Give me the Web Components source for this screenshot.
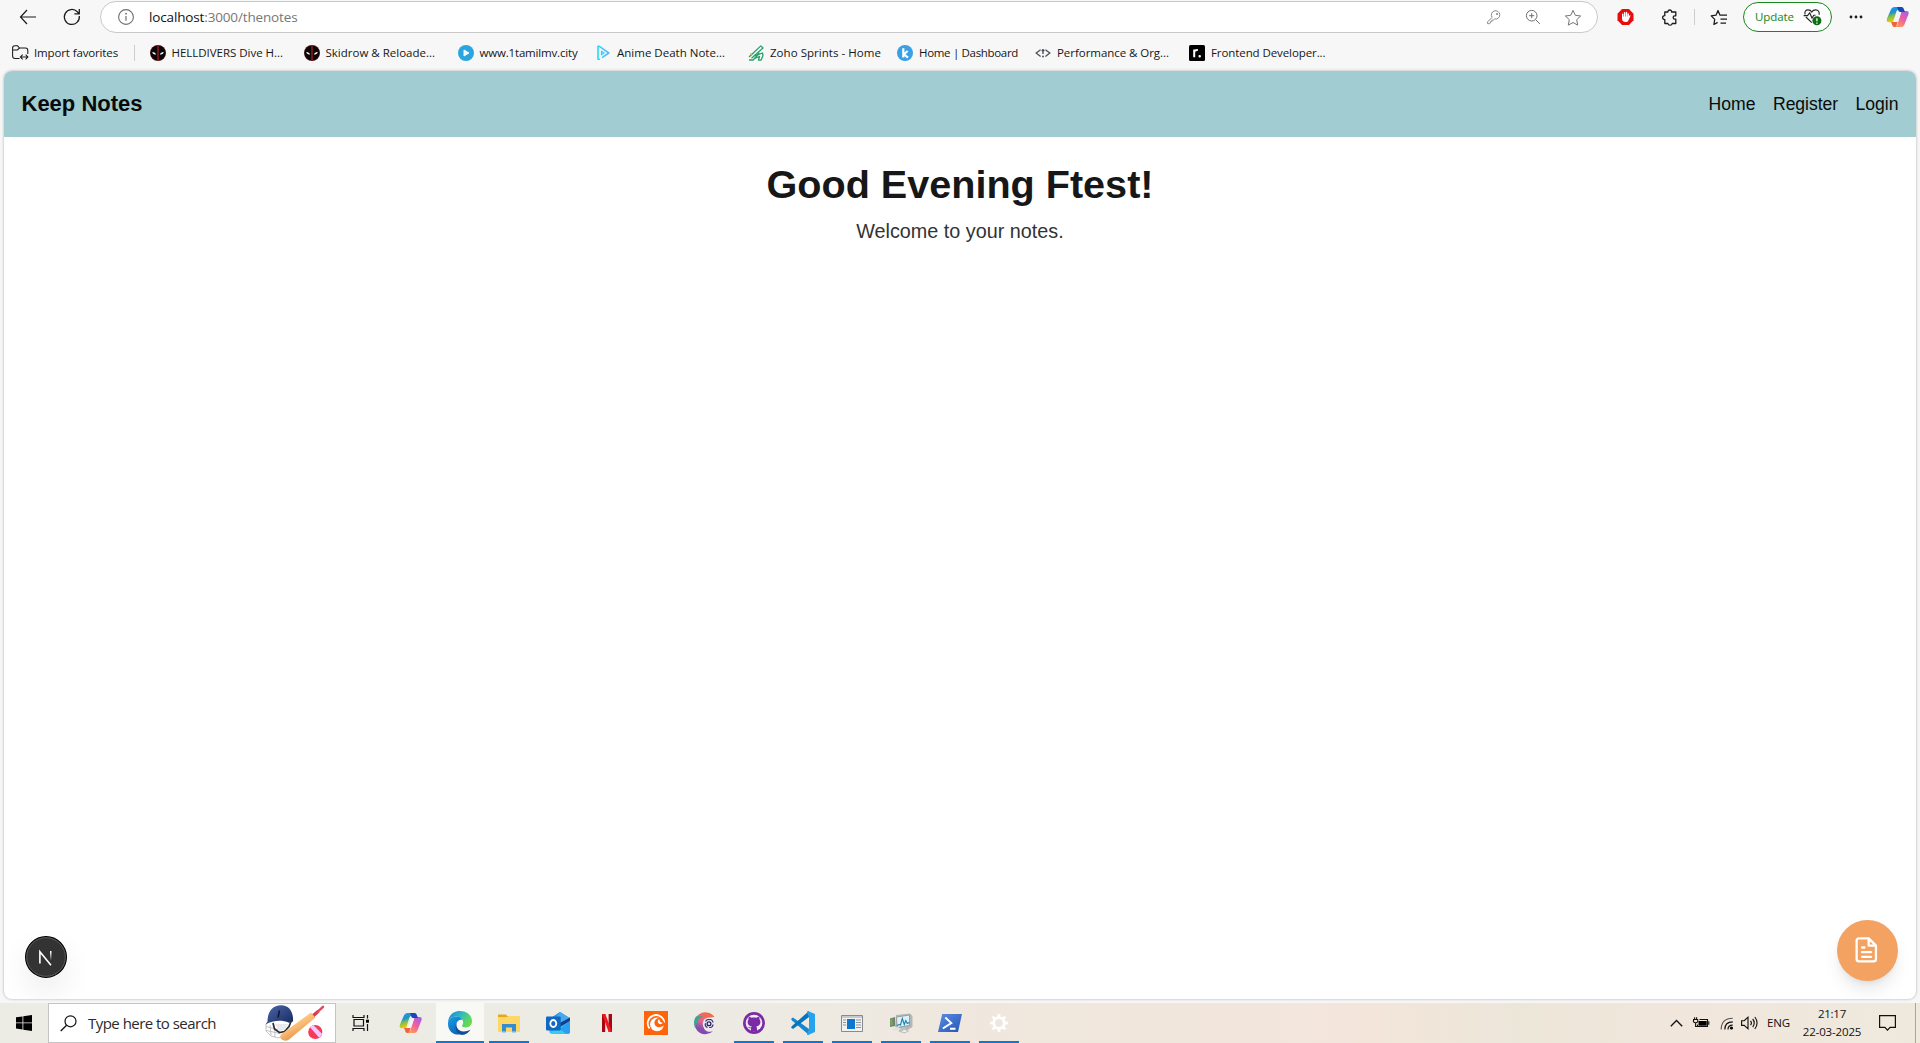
<!DOCTYPE html>
<html lang="en">
<head>
<meta charset="utf-8">
<title>Keep Notes</title>
<style>
html,body{margin:0;height:100%;overflow:hidden;background:#f7f7f7}
</style>
</head>
<body>
<desk-top></desk-top>
<script>
const define = (name, html, after) => {
  const t = document.createElement('template');
  t.innerHTML = html;
  customElements.define(name, class extends HTMLElement {
    connectedCallback() {
      if (this.shadowRoot) return;
      this.attachShadow({mode: 'open'}).append(t.content.cloneNode(true));
      if (after) after(this, this.shadowRoot);
    }
  });
};

const copilot = (id) => `<defs><linearGradient id="${id}a" x1="0" y1="0" x2=".3" y2="1"><stop offset="0" stop-color="#1aa7f0"/><stop offset=".4" stop-color="#1d8fd0"/><stop offset=".65" stop-color="#7cc14a"/><stop offset="1" stop-color="#ffc800"/></linearGradient><linearGradient id="${id}b" x1=".8" y1="0" x2=".2" y2="1"><stop offset="0" stop-color="#a45fe8"/><stop offset=".5" stop-color="#f0609c"/><stop offset="1" stop-color="#ff9a5a"/></linearGradient></defs>
<path fill="url(#${id}b)" d="M9 22h6c2 0 3-1 3.800-3.500l3.600-9c.8-2.500 0-3.500-2-3.500h-5L12 17.500C11.500 19.500 11 21.500 9 22z"/><path fill="url(#${id}a)" d="M15.500 2h-7C6.500 2 5.300 3.200 4.500 5.500L1 13.500C.2 16 1 17.200 3.200 17.200H7l3.200-10C10.800 5 12 4.500 14 4.500h2.500z"/><path fill="#1748b8" d="M11 2h4.500c1.500 0 2 1 2.500 2.500L19 7h-4.500c-1.500 0-2-.7-2.500-2.500z"/><path fill="#f4623a" d="M5 17h4.500l3-3-2 6.500c-.5 1.200-1 1.500-2 1.500-1.500 0-2-1-2.500-2.700z"/><path fill="#f4f4fb" d="M12.300 7.500h3l-2.800 8c-.5 1.200-1 1.500-2.200 1.500H8.500z"/>`;

const mask = `<circle cx="8" cy="8" r="8" fill="#4a1116"/><circle cx="8" cy="8" r="7.300" fill="#090707"/><path d="M8 0v16" stroke="#86151c" stroke-width="1.800"/><path fill="#fff" d="M2.300 7c1.900 0 3.400.9 3.800 2.400-1.900.5-3.600-.5-3.800-2.400zM13.700 7c-1.900 0-3.400.9-3.800 2.400 1.900.5 3.600-.5 3.800-2.400z"/>`;

/* name: [width, height, viewBox, markup] */
const ICONS = {
  back: [18,16,'0 0 18 16','<path d="M8 1L1.500 8 8 15M1.500 8H17" fill="none" stroke="#1b1b1b" stroke-width="1.200"/>'],
  refresh: [18,18,'0 0 18 18','<path d="M16.300 8A7.500 7.500 0 1 1 14.300 3.800L16.200 5.700M16.300 1v4.900h-4.900" fill="none" stroke="#1b1b1b" stroke-width="1.250"/>'],
  info: [16,16,'0 0 16 16','<circle cx="8" cy="8" r="7.400" fill="none" stroke="#6e6e6e" stroke-width="1.100"/><path d="M8 7v4.800" stroke="#6e6e6e" stroke-width="1.200"/><circle cx="8" cy="4.700" r=".9" fill="#6e6e6e"/>'],
  key: [16,16,'0 0 16 16','<path d="M6.200 8.400A4.200 4.200 0 1 1 8.600 10L7.200 11.200H5.800v1.500H4.300V14L3.700 14.700H1.600V12.700z" fill="none" stroke="#8a8a8a"/><circle cx="11" cy="5" r=".9" fill="#777"/>'],
  zoom: [16,16,'0 0 16 16','<circle cx="6.700" cy="6.700" r="5.300" fill="none" stroke="#6e6e6e"/><path d="M4.200 6.700h5M6.700 4.200v5M10.600 10.600l4.300 4.300" stroke="#6e6e6e"/>'],
  star: [18,17,'0 0 18 17','<path d="M9 1.400l2.300 4.900 5.400.7-4 3.700 1 5.400L9 13.500l-4.700 2.600 1-5.400-4-3.700 5.400-.7z" fill="none" stroke="#757575" stroke-linejoin="round"/>'],
  hand: [17,16,'0 0 17 16','<path d="M5 0h7l4.500 4.800v6.400L12 16H5L.5 11.200V4.800z" fill="#e80c0c"/><path d="M5.700 5.200V9M7.600 3.700V9M9.500 3.500V9M11.200 4.900V9" stroke="#fff" stroke-width="1.400" stroke-linecap="round"/><path fill="#fff" d="M5 7.500h6.500l1-1c.6-.5 1.200 0 .9.600l-2 4.500c-.7 1.200-1.300 1.500-2.700 1.500-2.600 0-3.700-1.200-3.700-3.500z"/>'],
  puzzle: [17,17,'0 0 17 17','<path d="M4.800 3H6.900c-.3-2.700 4-2.700 3.700 0H14.800V6.800h-1.200c-1.900 0-1.900 3.400 0 3.400H14.800V14.500H11.200c-.4 2.300-3.900 2.300-4.300 0H3.800v-4c-2.900.4-2.900-4.200 0-3.800V3z" fill="none" stroke="#1b1b1b" stroke-width="1.300" stroke-linejoin="round"/>'],
  favs: [18,17,'0 0 18 17','<path d="M10.600 6H9.900L8 1.500 6 6.200l-4.800.7L4.700 10.400 3.900 15.500 7.600 13.400M9.900 6H17M10.500 10H17M10.500 14H16" fill="none" stroke="#1b1b1b" stroke-width="1.250" stroke-linejoin="round"/>'],
  heart: [19,18,'0 0 19 18','<path d="M2.100 6.500C1.300 3.500 2.800 1.800 5 1.800c1.700 0 3 .8 3.800 2.200.8-1.400 2.100-2.200 3.800-2.200 2.600 0 4.300 2.300 3.400 5M2.900 9l5.900 5.700M.6 7.600H4.500L6.700 4.800 9 10 10.800 7.200H12.500" fill="none" stroke="#252525" stroke-width="1.150"/><circle cx="13.900" cy="12.800" r="4.500" fill="#0d6d12"/><path d="M13.900 10.200v3.100M13.900 14.500v1.200" stroke="#fff" stroke-width="1.300"/>'],
  dots: [14,4,'0 0 14 4','<g fill="#1b1b1b"><circle cx="2" cy="2" r="1.400"/><circle cx="7" cy="2" r="1.400"/><circle cx="12" cy="2" r="1.400"/></g>'],
  copilot: [24,24,'0 0 24 24',copilot('c')],
  import: [17,16,'0 0 17 16','<path d="M7.500 13.500H3c-1.500 0-2.400-.9-2.400-2.400V3C.6 1.500 1.400.8 2.800.8h2.700L7.600 3H13.500c1.500 0 2.300.9 2.300 2.400V9M.8 4.900h4.500L7.600 3M8.800 12h6.800M10.700 9.700L8.400 12l2.300 2.300M13.600 9.700l2.300 2.300-2.300 2.300" fill="none" stroke="#1b1b1b" stroke-width="1.050"/>'],
  mask: [16,16,'0 0 16 16',mask],
  play: [16,16,'0 0 16 16','<circle cx="8" cy="8" r="8" fill="#2aa5e0"/><path d="M6 5l5 3-5 3z" fill="#f2fbff" stroke="#f2fbff" stroke-linejoin="round"/>'],
  anime: [16,16,'0 0 16 16','<defs><linearGradient id="an" gradientUnits="userSpaceOnUse" x1="1" y1="0" x2="14" y2="0"><stop offset="0" stop-color="#17e3f5"/><stop offset="1" stop-color="#5eb5fb"/></linearGradient></defs><path d="M5 14.300H3V1.400h1.400L13.800 8 7 12.600" fill="none" stroke="url(#an)" stroke-width="1.600" stroke-linejoin="round"/><path d="M6.500 6.200l2.700 1.800-2.700 1.800z" fill="none" stroke="#36cff7" stroke-width="1.200" stroke-linejoin="round"/>'],
  zoho: [16,16,'0 0 16 16','<path d="M1 12L12.800.9 15 3 3.500 13.200M1 15h4.200L11.500 8" fill="none" stroke="#26a269" stroke-width="1.300" stroke-linejoin="round"/><path d="M6.500 10.800L14.500 8 15 10.500 13 15.200H10.500L11.500 11.500 6.500 13.300" fill="none" stroke="#26a269" stroke-width="1.300" stroke-linejoin="round"/><path d="M2.300 8.500l1.500 1.300" stroke="#f5a623" stroke-width="1.500"/>'],
  kite: [16,16,'0 0 16 16','<circle cx="8" cy="8" r="8" fill="#37a0e6"/><path d="M6.300 3.300v9.200M10.600 6L7 9.300l4 3.300" fill="none" stroke="#fff" stroke-width="2.200"/>'],
  code: [16,16,'0 0 16 16','<path d="M5.600 4.700L1.200 8l4.400 3.400M10.400 4.700L14.800 8l-4.400 3.400" fill="none" stroke="#4a515c" stroke-width="1.300"/><path d="M8 4v5M6.600 5.500h2.800" stroke="#3f4754" stroke-width="1.300"/><circle cx="8" cy="11.500" r=".9" fill="#3f4754"/>'],
  roadmap: [16,16,'0 0 16 16','<rect width="16" height="16" rx="1.500" fill="#000"/><path d="M5.200 12.200V4.500M5.200 8C5.200 5.600 6.500 4.800 8.800 5" fill="none" stroke="#fff" stroke-width="2"/><rect x="9.500" y="10" width="2.400" height="2.400" rx="1" fill="#fff"/>'],
  note: [29,29,'0 0 24 24','<path d="M14 2.500H6C4.600 2.500 4 3.200 4 4.500v15c0 1.400.6 2 2 2h12c1.400 0 2-.6 2-2V8.500l-6-6zM14 2.500v6h6M8.500 10h2M8.500 13.900h7.500M8.500 17.700h7.500" transform="translate(-1 -.5)" fill="none" stroke="#fff" stroke-width="1.900" stroke-linejoin="round" stroke-linecap="round"/>'],
  next: [42,42,'0 0 42 42','<defs><linearGradient id="n" x1="0" y1="0" x2="0" y2="1"><stop offset=".1" stop-color="#fff"/><stop offset="1" stop-color="#fff" stop-opacity="0"/></linearGradient></defs><circle cx="21" cy="21" r="20.400" fill="#333" stroke="#000" stroke-width="1.200"/><circle cx="21" cy="21" r="19.300" fill="none" stroke="#5d5d5d" stroke-width=".9"/><path d="M14.900 27.500V15.700L26 29.300" fill="none" stroke="#fff" stroke-width="1.600"/><rect x="25" y="15" width="1.500" height="9.500" fill="url(#n)"/>'],
  start: [16,16,'0 0 16 16','<path d="M0 2.300L6.500 1.400V7.500H0zM7.300 1.300L16 0v7.500H7.300zM0 8.300h6.500v6.200L0 13.600zM7.300 8.300H16V16l-8.700-1.300z"/>'],
  search: [17,17,'0 0 17 17','<circle cx="10.500" cy="6.300" r="5.500" fill="none" stroke="#111" stroke-width="1.200"/><path d="M6.600 10.200L.7 16" stroke="#111" stroke-width="1.300"/>'],
  cricket: [62,38,'0 0 62 38','<defs><linearGradient id="h" x1="0" y1="0" x2="1" y2="1"><stop offset="0" stop-color="#4c68ab"/><stop offset="1" stop-color="#17295e"/></linearGradient><linearGradient id="bt" x1=".3" y1=".2" x2=".7" y2=".8"><stop offset="0" stop-color="#ffd69b"/><stop offset=".5" stop-color="#f9b870"/><stop offset="1" stop-color="#e38d43"/></linearGradient></defs><path d="M3 20v7l5 5 7 2 6-2M3 22.500l12 3M3.500 26.500l13 3M7 21l1 10M11.500 23l.5 10" fill="none" stroke="#b9bcc0" stroke-width=".9"/><path d="M10 19l1.500 6 5 3.500 5-1 4.500-5 2-5" fill="none" stroke="#2a2c33" stroke-width="1.700"/><path d="M12 20h13l-3 6-6 1z" fill="#e9eaec"/><path d="M2.500 20.500l2-3C4.500 7.500 9.500 1.200 18 1.200c8.500 0 12.700 7 12 16.300l-4 1.200C18 15.500 10 16.500 2.500 20.500z" fill="url(#h)"/><path d="M15 13.500l1.500-7" stroke="#0e1733" stroke-width="1.500"/><path d="M18 30.500L48 8.500c1.500 1 4 3 4.500 5L26 35.500c-4 3-11 0-8-5z" fill="url(#bt)"/><path d="M50.500 11.500l5-4.500" stroke="#d23c50" stroke-width="3.200"/><path d="M54.500 7.800l5.500-5" stroke="#e2495b" stroke-width="2.500" stroke-linecap="round"/><circle cx="52.300" cy="28" r="7.100" fill="#f53a5a"/><path d="M47 23.200l9 10.200c1.500-.8 2.500-2 3-3.600L50.500 21.200c-1.500.3-2.700 1-3.500 2z" fill="#f0c8ff"/>'],
  taskview: [17,16,'0 0 17 16','<path d="M1 0v3M12 0v3M1 13v3M12 13v3M.5 2.500h12M.5 13.500h12M2 4.500h9.500v6.500H2z" fill="none" stroke="#111" stroke-width="1.200"/><path d="M15.500 0v3.500M15.500 9v7" stroke="#111" stroke-width="1.200"/><path d="M14 4.700h3v3h-3z"/>'],
  edge: [24,24,'0 0 24 24','<defs><linearGradient id="e1" x1="0" y1=".1" x2="1" y2=".6"><stop offset="0" stop-color="#1588c9"/><stop offset=".45" stop-color="#2db6c8"/><stop offset=".8" stop-color="#57d46e"/><stop offset="1" stop-color="#67dc4d"/></linearGradient><linearGradient id="e2" x1="0" y1="0" x2=".6" y2="1"><stop offset="0" stop-color="#1a9ce8"/><stop offset="1" stop-color="#0964b6"/></linearGradient></defs><path d="M0 12C0 4.500 5.500 0 12 0c7.500 0 12 5 12 10.200 0 3.700-2.700 6.200-6.200 6.200-2.500 0-3.800-.7-3.800-1.700 0-.8 1.200-1.200 1.200-3.300C15 8 12 5.500 8 5.500 4 5.500.5 8.200 0 12z" fill="url(#e1)"/><path d="M0 12c.5-4 4-6.400 8-6.400 3 0 5.200 1.200 6.300 3C9 8.800 7.300 13 8.500 16.500c1 3.300 4 5.800 8 5.300C10 26-.5 23 0 12z" fill="url(#e2)"/><path d="M9.500 10.500c-3 4 .5 10 6 10 3 0 5-.7 7-2-1.500 3-4.500 5.300-8.500 5.500-6-1-8.500-8-4.500-13.500z" fill="#124f99"/>'],
  folder: [22,20,'0 0 22 20','<path d="M0 1.500h8l1.500 2H22v15H0z" fill="#e6a817"/><path d="M0 4h10l1-1h11v16H0z" fill="#ffd767"/><path d="M4 19v-8h14v8h-4v-4.500H8V19z" fill="#368ccd"/><path d="M4 18h4v1.500H4zM14 18h4v1.500h-4z" fill="#6fb5e8"/>'],
  outlook: [24,24,'0 0 24 24','<path d="M3.500 8L14 1l10 6.500V21c0 1-.8 1.800-2 1.800H6c-1.500 0-2.500-.8-2.500-2z" fill="#35b5ee"/><path d="M3.500 8L14 1l6 4-10 7z" fill="#3f93e0"/><path d="M14 1l10 6-12 8-3-6z" fill="#4aa8ec"/><path d="M24 6.500V10L12 17v-4z" fill="#123f8c"/><path d="M24 9.500V21c0 1-.8 1.800-2 1.800H9z" fill="#2a9ff0"/><path d="M5 20l10-1 5 3.800H6z" fill="#37cdf2"/><rect y="5.500" width="14.700" height="14" rx="1" fill="#1267c2"/><ellipse cx="7.300" cy="12.500" rx="3" ry="3.500" fill="none" stroke="#fff" stroke-width="1.800"/>'],
  netflix: [10,18,'0 0 10 18','<path d="M0 0h3.200v18H0zM6.600 0H10v18H6.600z" fill="#a90710"/><path d="M0 0h3.300L10 18H6.700z" fill="#ee1722"/>'],
  crunchy: [24,24,'0 0 24 24','<path d="M0 0h24v24H0z" fill="#ff640a"/><path d="M5.500 17.500A8.300 8.300 0 1 1 20.300 12" fill="none" stroke="#fff" stroke-width="1.800"/><circle cx="13" cy="13.300" r="6.900" fill="#fff"/><circle cx="15" cy="11.700" r="4.600" fill="#ff640a"/><path d="M15 6l6 6-1.800 3.500-4-1z" fill="#ff640a"/><path d="M15.300 8a2.700 2.700 0 1 0 3.500 3.800c-2 .2-3.500-1.500-3.500-3.800z" fill="#fff"/>'],
  swirl: [22,22,'0 0 22 22','<defs><linearGradient id="s" x1=".6" y1="0" x2=".3" y2="1"><stop offset="0" stop-color="#f46c42"/><stop offset=".45" stop-color="#e6648d"/><stop offset=".75" stop-color="#7a55ae"/><stop offset="1" stop-color="#9a35b5"/></linearGradient></defs><path d="M20.500 5A11 11 0 1 0 19 19.300c-3 1-7 .3-8.700-2.400C7.500 12 12 5 20.500 5z" fill="url(#s)"/><path d="M2 4.500C-.5 8-.5 13 1.500 16.500 2 11 4 7 9 4z" fill="#31a995"/><circle cx="15" cy="11.800" r="6.300" fill="#ece7f4"/><path d="M15 7.700c2-.7 4 .8 4 2.800M19 12.500c0 2-1.700 3.300-3.700 3M13.500 15.500c-2-.7-2.800-2.500-2-4.200M11.500 9.500c.7-1.500 2-2.200 3.500-2" fill="none" stroke="#25245a" stroke-width="1.100"/><circle cx="15" cy="11.700" r="1.900" fill="none" stroke="#25245a" stroke-width="1.300"/>'],
  github: [22,22,'0 0 22 22','<circle cx="11" cy="11" r="11" fill="#7b2ba3"/><circle cx="11" cy="11" r="8.300" fill="#f1ecf5"/><path d="M8 19v-2.700c-2 .4-2.500-1.300-3.400-1.600 1.700-.4 2 1.100 3.500.7.200-.5.400-.8.700-1-2.700-.4-4.200-1.700-4.200-4.400 0-1.200.4-2 1-2.700-.2-.7-.2-1.600.2-2.600 1 0 1.900.4 2.600 1 1.600-.4 3.600-.4 5.200 0 .7-.6 1.600-1 2.600-1 .4 1 .4 1.900.2 2.600.6.700 1 1.500 1 2.700 0 2.700-1.500 4-4.200 4.400.6.500.8 1.300.8 2.300V19z" fill="#7b2ba3"/>'],
  vscode: [24,24,'0 0 24 24','<path d="M0 8l2-1.500L18 18v6L1 9.500z" fill="#1586cf"/><path d="M0 16.500L2 18 18 6V0L1 15z" fill="#0874bd"/><path d="M17 0l7 3v18l-7 3c-.8 0-1-.5-1-1.500L18 18V6l-2-4.500C16 .5 16.300 0 17 0z" fill="#27a3ec"/>'],
  window: [22,17,'0 0 22 17','<path d="M.5.500h21v16H.5z" fill="#f2f2f2" stroke="#858b90"/><path d="M1 1h20v2H1z" fill="#c6cacc"/><path d="M6 4h8v10H6z" fill="#0d76d3"/><path d="M2 5h3M2 7.500h3M2 10h3M15 5h5M15 7.500h5M15 10h5M15 12.500h5" stroke="#8d9194"/>'],
  perf: [24,22,'0 0 24 22','<path d="M1 6.500l5-1.500v9l-5 1z" fill="#777e78"/><path d="M1.500 7.500l2-.5v6l-2 .5z" fill="#5fc13a"/><path d="M7 3l14-1.500L23.500 4v11l-6 3.500L6 15z" fill="#b4b7b5"/><path d="M7.500 5L20.500 3v10.500L8 15.500z" fill="#dbf0f8" stroke="#9a9e9d"/><path d="M8 13.500l2-1 1.500.5 1.800-6.500 2 6 1.500-4 1.500 3 2-1" fill="none" stroke="#1d83b2" stroke-width="1.100"/><path d="M11 16l5-1 1.500 3 3 1-5 2.500-6-2z" fill="#bfc1be"/><path d="M3 16.500l6-1.500 3 2-6 2z" fill="#e2e3df"/><path d="M12.500 19l3.500-1 2 1.300-3 1z" fill="#f4f4f0"/>'],
  shell: [24,18,'0 0 24 18','<defs><linearGradient id="ps" x1="0" y1="0" x2="1" y2="1"><stop offset="0" stop-color="#5d8ce0"/><stop offset="1" stop-color="#2356b8"/></linearGradient></defs><path d="M4.200 0H24l-4 18H0z" fill="url(#ps)"/><path d="M7.300 3.500l6 5.500-8.500 5.500M12 14.700h5.500" fill="none" stroke="#fff" stroke-width="1.900"/>'],
  gear: [18,18,'0 0 18 18','<circle cx="9" cy="9" r="5.300" fill="none" stroke="#fff" stroke-width="2.700"/><path d="M9 0v3M9 15v3M0 9h3M15 9h3M2.600 2.600l2.200 2.200M13.200 13.200l2.200 2.200M2.600 15.400l2.200-2.200M13.200 4.800l2.200-2.200" stroke="#fff" stroke-width="2.700"/>'],
  chevron: [13,8,'0 0 13 8','<path d="M.8 7.200l5.700-5.700 5.700 5.700" fill="none" stroke="#111" stroke-width="1.300"/>'],
  battery: [17,12,'0 0 17 12','<path d="M6.500 2.500h8v7h-10V7.500M15.800 4.300v3.400M.5 2.500h4.200v2.300c-.7 1.300-3.500 1.300-4.200 0zM1.600.3v2.200M3.600.3v2.200M2.600 5.500v4h2" fill="none" stroke="#111" stroke-width="1.100"/><path d="M5.500 4h8.200v4.700H5.500z"/>'],
  wifi: [14,14,'0 0 14 14','<circle cx="11.500" cy="12" r="1.600"/><path d="M8 13.500c0-2.800 1.500-4.300 4.700-4.300M4.800 13.500c0-5 3-7.600 8-7.600" fill="none" stroke="#111" stroke-width="1.200"/><path d="M1.200 13.500C1.200 6 5.500 2.200 12.800 2.200" fill="none" stroke="#555" stroke-width="1.100"/>'],
  sound: [18,14,'0 0 18 14','<path d="M.6 4.700h2.600L7 1.200v11.600L3.200 9.300H.6zM9.500 4.800c1 1.200 1 3.200 0 4.400M11.700 3c2 2.200 2 5.800 0 8M13.800 1c3 3.500 3 8.500 0 12" fill="none" stroke="#111" stroke-width="1.150"/>'],
  message: [17,16,'0 0 17 16','<path d="M.6.600h15.800v11.700h-5.300l-2.600 2.800-2.600-2.800H.6z" fill="none" stroke="#111" stroke-width="1.200"/>']
};

define('ui-icon', `<style>:host{display:inline-flex;flex:none}svg{display:block;overflow:visible}</style>`, (el, root) => {
  const [w, h, box, body] = ICONS[el.getAttribute('name')];
  const s = el.getAttribute('size');
  const holder = document.createElement('template');
  holder.innerHTML = `<svg width="${s || w}" height="${s || h}" viewBox="${box}">${body}</svg>`;
  root.append(holder.content);
});

/* Tracks its text so that the line takes up exactly the given width. */
define('fit-text', `<style>:host{display:block;flex:none;white-space:nowrap;overflow:visible}span{display:inline-block;white-space:nowrap}</style><span><slot></slot></span>`, (el, root) => {
  const w = +el.getAttribute('w');
  el.style.width = w + 'px';
  const span = root.querySelector('span');
  span.style.letterSpacing = ((w - span.getBoundingClientRect().width) / el.textContent.length).toFixed(3) + 'px';
});

define('tool-cell', `<style>:host{display:flex;flex:none;align-items:center;justify-content:center;height:100%;width:var(--w,32px)}</style><slot></slot>`);

define('address-bar', `<style>
:host{display:flex;flex:1;align-items:center;box-sizing:border-box;height:32px;background:#fff;border:1px solid #c9c9c9;border-radius:16px;padding:0 15px 0 17px;font:13.500px "Open Sans",sans-serif;color:#777}
fit-text{margin-left:15px;line-height:20px}
b{font-weight:400;color:#111}
.end{display:flex;margin-left:auto;gap:23px;align-items:center}
</style><ui-icon name="info"></ui-icon><fit-text w="148.500"><b>localhost</b>:3000/thenotes</fit-text><div class="end"><ui-icon name="key"></ui-icon><ui-icon name="zoom" ></ui-icon><ui-icon name="star"></ui-icon></div>`);

define('update-pill', `<style>:host{display:flex;box-sizing:border-box;width:89px;height:30px;margin-left:7px;border:1px solid #17871b;border-radius:15px;background:#fcfdfc;align-items:center;padding:0 9px 0 11px;justify-content:space-between;font:11.500px/16px "Open Sans",sans-serif;color:#17871b}</style><fit-text w="39">Update</fit-text><ui-icon name="heart"></ui-icon>`);

define('browser-toolbar', `<style>:host{display:flex;height:34px;flex:none;align-items:center;padding-right:4px}i{width:1px;height:16px;background:#cdcdcd}</style>
<tool-cell style="--w:56px"><ui-icon name="back"></ui-icon></tool-cell><tool-cell><ui-icon name="refresh"></ui-icon></tool-cell>
<address-bar style="margin-left:12px"></address-bar>
<tool-cell style="--w:55px"><ui-icon name="hand"></ui-icon></tool-cell><tool-cell style="--w:33px"><ui-icon name="puzzle"></ui-icon></tool-cell><tool-cell style="--w:16px"><i></i></tool-cell><tool-cell style="--w:34px"><ui-icon name="favs"></ui-icon></tool-cell><update-pill></update-pill><tool-cell style="--w:48px"><ui-icon name="dots"></ui-icon></tool-cell><tool-cell style="--w:36px"><ui-icon name="copilot"></ui-icon></tool-cell>`);

define('book-mark', `<style>:host{display:flex;flex:none;align-items:center;gap:6px;width:var(--w)}span{width:16px;display:flex}</style><span></span><slot></slot>`, (el, root) => {
  root.querySelector('span').innerHTML = `<ui-icon name="${el.getAttribute('icon')}"></ui-icon>`;
});

define('bookmark-bar', `<style>:host{display:flex;flex:none;height:37px;align-items:center;padding-left:12px;font:11.500px/16px "Open Sans",sans-serif;color:#161616}i{width:1px;height:16px;background:#cdcdcd;margin-left:10px}</style>
<book-mark icon="import" style="--w:137.500px"><fit-text w="84">Import favorites</fit-text><i></i></book-mark>
<book-mark icon="mask" style="--w:154px"><fit-text w="111.500">HELLDIVERS Dive H...</fit-text></book-mark>
<book-mark icon="mask" style="--w:154px"><fit-text w="109.500">Skidrow &amp; Reloade...</fit-text></book-mark>
<book-mark icon="play" style="--w:137.500px"><fit-text w="98">www.1tamilmv.city</fit-text></book-mark>
<book-mark icon="anime" style="--w:153px"><fit-text w="108">Anime Death Note...</fit-text></book-mark>
<book-mark icon="zoho" style="--w:149px"><fit-text w="111">Zoho Sprints - Home</fit-text></book-mark>
<book-mark icon="kite" style="--w:138px"><fit-text w="99">Home | Dashboard</fit-text></book-mark>
<book-mark icon="code" style="--w:154px"><fit-text w="112">Performance &amp; Org...</fit-text></book-mark>
<book-mark icon="roadmap" style="--w:140px"><fit-text w="114.500">Frontend Developer...</fit-text></book-mark>`);

define('notes-nav', `<style>:host{display:flex;height:66px;flex:none;align-items:center;justify-content:space-between;padding:0 17.500px;background:#a1ccd1;color:#0a0a0a;font-family:"Liberation Sans",Arial,sans-serif}.brand{font-size:22px;font-weight:700;line-height:30px}nav{display:flex;gap:17.500px;font-size:17.600px;line-height:24px}</style>
<fit-text class="brand" w="121">Keep Notes</fit-text><nav><fit-text w="47">Home</fit-text><fit-text w="65">Register</fit-text><fit-text w="43">Login</fit-text></nav>`);

define('greeting-block', `<style>:host{display:flex;flex-direction:column;align-items:center;padding-top:25px;font-family:"Liberation Sans",Arial,sans-serif}h1{margin:0;font-size:39.600px;line-height:44px;color:#171717}p{margin:10px 0 0;font-size:19.800px;line-height:31px;color:#333}</style>
<h1><fit-text w="387">Good Evening Ftest!</fit-text></h1><p><fit-text w="207.500">Welcome to your notes.</fit-text></p>`);

define('note-fab', `<style>:host{display:flex;width:61px;height:61px;border-radius:50%;background:#f4a261;align-items:center;justify-content:center;box-shadow:0 11px 17px -3px #0000001a,0 4px 7px -4px #0000001a}</style><ui-icon name="note"></ui-icon>`);

define('next-badge', `<style>:host{display:flex;width:42px;height:42px;border-radius:50%;box-shadow:0 14px 34px -8px #00000030}</style><ui-icon name="next"></ui-icon>`);

define('notes-page', `<style>:host{display:flex;flex-direction:column;height:928px;flex:none;margin:0 4px;background:#fff;border-radius:8px;overflow:hidden;box-shadow:0 0 3px #0000004d}.foot{margin-top:auto;display:flex;justify-content:space-between;align-items:flex-end;padding:0 18px 18px 21px}next-badge{margin-bottom:3px}</style>
<notes-nav></notes-nav><greeting-block></greeting-block><div class="foot"><next-badge></next-badge><note-fab></note-fab></div>`);

define('task-item', `<style>:host{display:flex;flex:none;box-sizing:border-box;width:49px;height:40px;align-items:center;justify-content:center;padding-right:1px;background:linear-gradient(#0a78d4,#0a78d4) 4px 100%/40px 0 no-repeat}:host([open]){background-size:40px 2px}:host([active]){background:linear-gradient(#0a78d4,#0a78d4) 0 100%/48px 2px no-repeat,linear-gradient(#f8f8f5,#f8f8f5) 0 0/48px 100% no-repeat}</style>`, (el, root) => {
  const i = document.createElement('ui-icon');
  i.setAttribute('name', el.getAttribute('icon'));
  root.append(i);
});

define('search-box', `<style>:host{display:flex;box-sizing:border-box;width:288px;height:40px;border:1px solid #c4c4c4;background:#fff;align-items:center;padding:0 10px 0 11px;font:15px/20px "Open Sans",sans-serif;color:#2b2b2b}fit-text{margin-left:11px}.art{margin-left:auto}</style><ui-icon name="search"></ui-icon><fit-text w="128">Type here to search</fit-text><ui-icon class="art" name="cricket"></ui-icon>`);

define('system-tray', `<style>:host{display:flex;margin-left:auto;align-items:center;height:40px;font:11.500px/18px "Open Sans",sans-serif;color:#111}.clock{display:flex;flex-direction:column;align-items:center;width:58px;margin-left:12px}.end{margin:0 19px 0 18px}i{width:1px;height:40px;background:#aaa59f;margin-right:4px}</style>
<ui-icon name="chevron"></ui-icon><ui-icon name="battery" style="margin-left:10px"></ui-icon><ui-icon name="wifi" style="margin-left:10px"></ui-icon><ui-icon name="sound" style="margin-left:7px"></ui-icon><fit-text w="23" style="margin-left:8px;margin-right:1px">ENG</fit-text><div class="clock"><fit-text w="28">21:17</fit-text><fit-text w="58.500">22-03-2025</fit-text></div><ui-icon class="end" name="message"></ui-icon><i></i>`);

define('task-bar', `<style>:host{display:flex;height:40px;margin-top:4px;flex:none;align-items:center;background:linear-gradient(90deg,#ecebe4,#ecebe4 36%,#f0e7dd 54%,#f3e6dc 68%,#f3e5da 72%,#ece6d9 79%,#f0e6db 85%,#f1e7dc 91%,#efe9dc)}.start{display:flex;width:48px;justify-content:center}task-item.cp{margin:0 0 0 2px}</style>
<div class="start"><ui-icon name="start"></ui-icon></div><search-box></search-box><task-item icon="taskview"></task-item><task-item class="cp" icon="copilot"></task-item><task-item icon="edge" active></task-item><task-item icon="folder" open></task-item><task-item icon="outlook"></task-item><task-item icon="netflix"></task-item><task-item icon="crunchy"></task-item><task-item icon="swirl"></task-item><task-item icon="github" open></task-item><task-item icon="vscode" open></task-item><task-item icon="window" open></task-item><task-item icon="perf" open></task-item><task-item icon="shell" open></task-item><task-item icon="gear" open></task-item><system-tray></system-tray>`);

define('desk-top', `<style>:host{display:flex;flex-direction:column;width:1920px;height:1043px;background:#f7f7f7}</style><browser-toolbar></browser-toolbar><bookmark-bar></bookmark-bar><notes-page></notes-page><task-bar></task-bar>`);
</script>
</body>
</html>
